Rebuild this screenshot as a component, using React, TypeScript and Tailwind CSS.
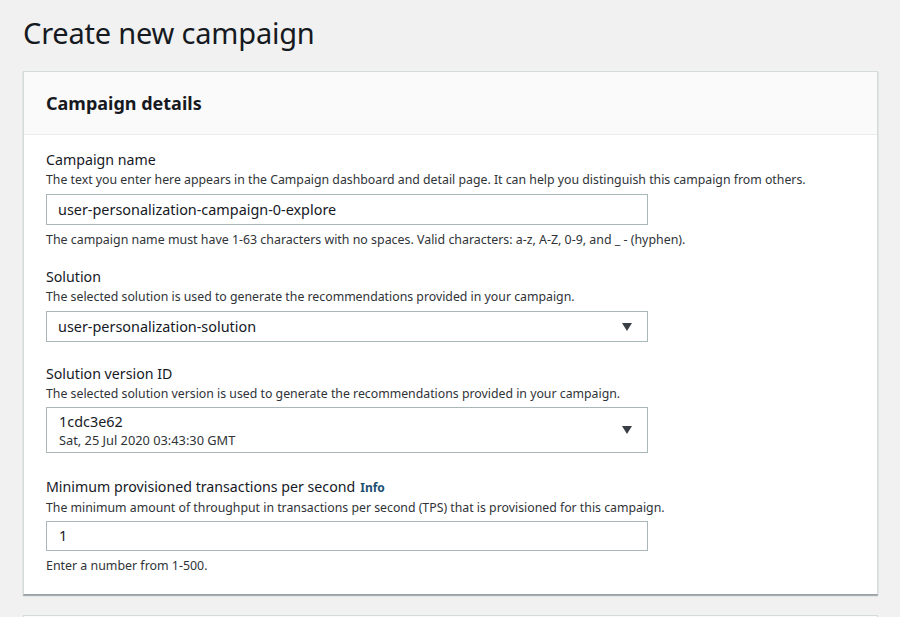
import React from 'react';

interface FieldProps {
  label: string;
  info?: boolean;
  description: string;
  hint?: string;
  children: React.ReactNode;
  className?: string;
}

const Field: React.FC<FieldProps> = ({ label, info, description, hint, children, className }) => (
  <div className={className}>
    <div className="text-[14.2px] leading-[20px] text-[#16191f]">
      {label}
      {info && <span className="ml-[5px] text-[12px] font-bold text-[#1d4f73]">Info</span>}
    </div>
    <div className="mt-[2px] text-[12.3px] leading-[16px] text-[#2f3338]">{description}</div>
    {children}
    {hint && <div className="mt-[7px] text-[12.4px] leading-[16px] text-[#2f3338]">{hint}</div>}
  </div>
);

const Caret = () => (
  <svg width="10" height="8" viewBox="0 0 10 8" className="shrink-0">
    <path d="M0 0 H10 L5 8 Z" fill="#3a3f45" />
  </svg>
);

const App: React.FC = () => {
  return (
    <div
      className="h-[617px] bg-[#f0f1f0] pl-[23px] pr-[22px] pt-[14px] overflow-hidden"
      style={{ fontFamily: '"Noto Sans", "Open Sans", sans-serif' }}
    >
      <h1 className="text-[29px] leading-[38px] text-[#16191f] tracking-[-0.2px]">Create new campaign</h1>

      {/* Campaign details card */}
      <div className="mt-[19px] border border-[#d5dbdb] border-b-[#9aa0a6] bg-white shadow-[0_1px_1px_rgba(0,28,36,0.3)]">
        <div className="h-[63px] flex items-center px-[22px] bg-[#fafafa] border-b border-[#eaeded]">
          <h2 className="text-[18px] font-bold text-[#16191f]">Campaign details</h2>
        </div>

        <div className="px-[22px] pt-[15px] pb-[20px]">
          <Field
            label="Campaign name"
            description="The text you enter here appears in the Campaign dashboard and detail page. It can help you distinguish this campaign from others."
            hint="The campaign name must have 1-63 characters with no spaces. Valid characters: a-z, A-Z, 0-9, and _ - (hyphen)."
          >
            <div className="mt-[6px] w-[602px] h-[31px] border border-[#aab7b8] flex items-center px-[11px] text-[14.4px] text-[#16191f]">
              user-personalization-campaign-0-explore
            </div>
          </Field>

          <Field
            className="mt-[19px]"
            label="Solution"
            description="The selected solution is used to generate the recommendations provided in your campaign."
          >
            <div className="mt-[6px] w-[602px] h-[31px] border border-[#aab7b8] flex items-center justify-between pl-[11px] pr-[15px] text-[14.4px] text-[#16191f]">
              <span>user-personalization-solution</span>
              <Caret />
            </div>
          </Field>

          <Field
            className="mt-[22px]"
            label="Solution version ID"
            description="The selected solution version is used to generate the recommendations provided in your campaign."
          >
            <div className="mt-[5px] w-[602px] h-[46px] border border-[#aab7b8] flex items-center justify-between pl-[12px] pr-[15px] text-[#16191f]">
              <div className="flex flex-col pt-[2px]">
                <span className="text-[14.4px] leading-[19px]">1cdc3e62</span>
                <span className="text-[12.8px] leading-[19px] text-[#2f3338]">Sat, 25 Jul 2020 03:43:30 GMT</span>
              </div>
              <Caret />
            </div>
          </Field>

          <Field
            className="mt-[24px]"
            label="Minimum provisioned transactions per second"
            info
            description="The minimum amount of throughput in transactions per second (TPS) that is provisioned for this campaign."
            hint="Enter a number from 1-500."
          >
            <div className="mt-[5px] w-[602px] h-[30px] border border-[#aab7b8] flex items-center px-[12px] text-[14.4px] text-[#16191f]">
              1
            </div>
          </Field>
        </div>
      </div>

      {/* Next card peeking in */}
      <div className="mt-[20px] h-[40px] border border-[#d5dbdb] bg-[#fafafa]" />
    </div>
  );
};

export default App;
